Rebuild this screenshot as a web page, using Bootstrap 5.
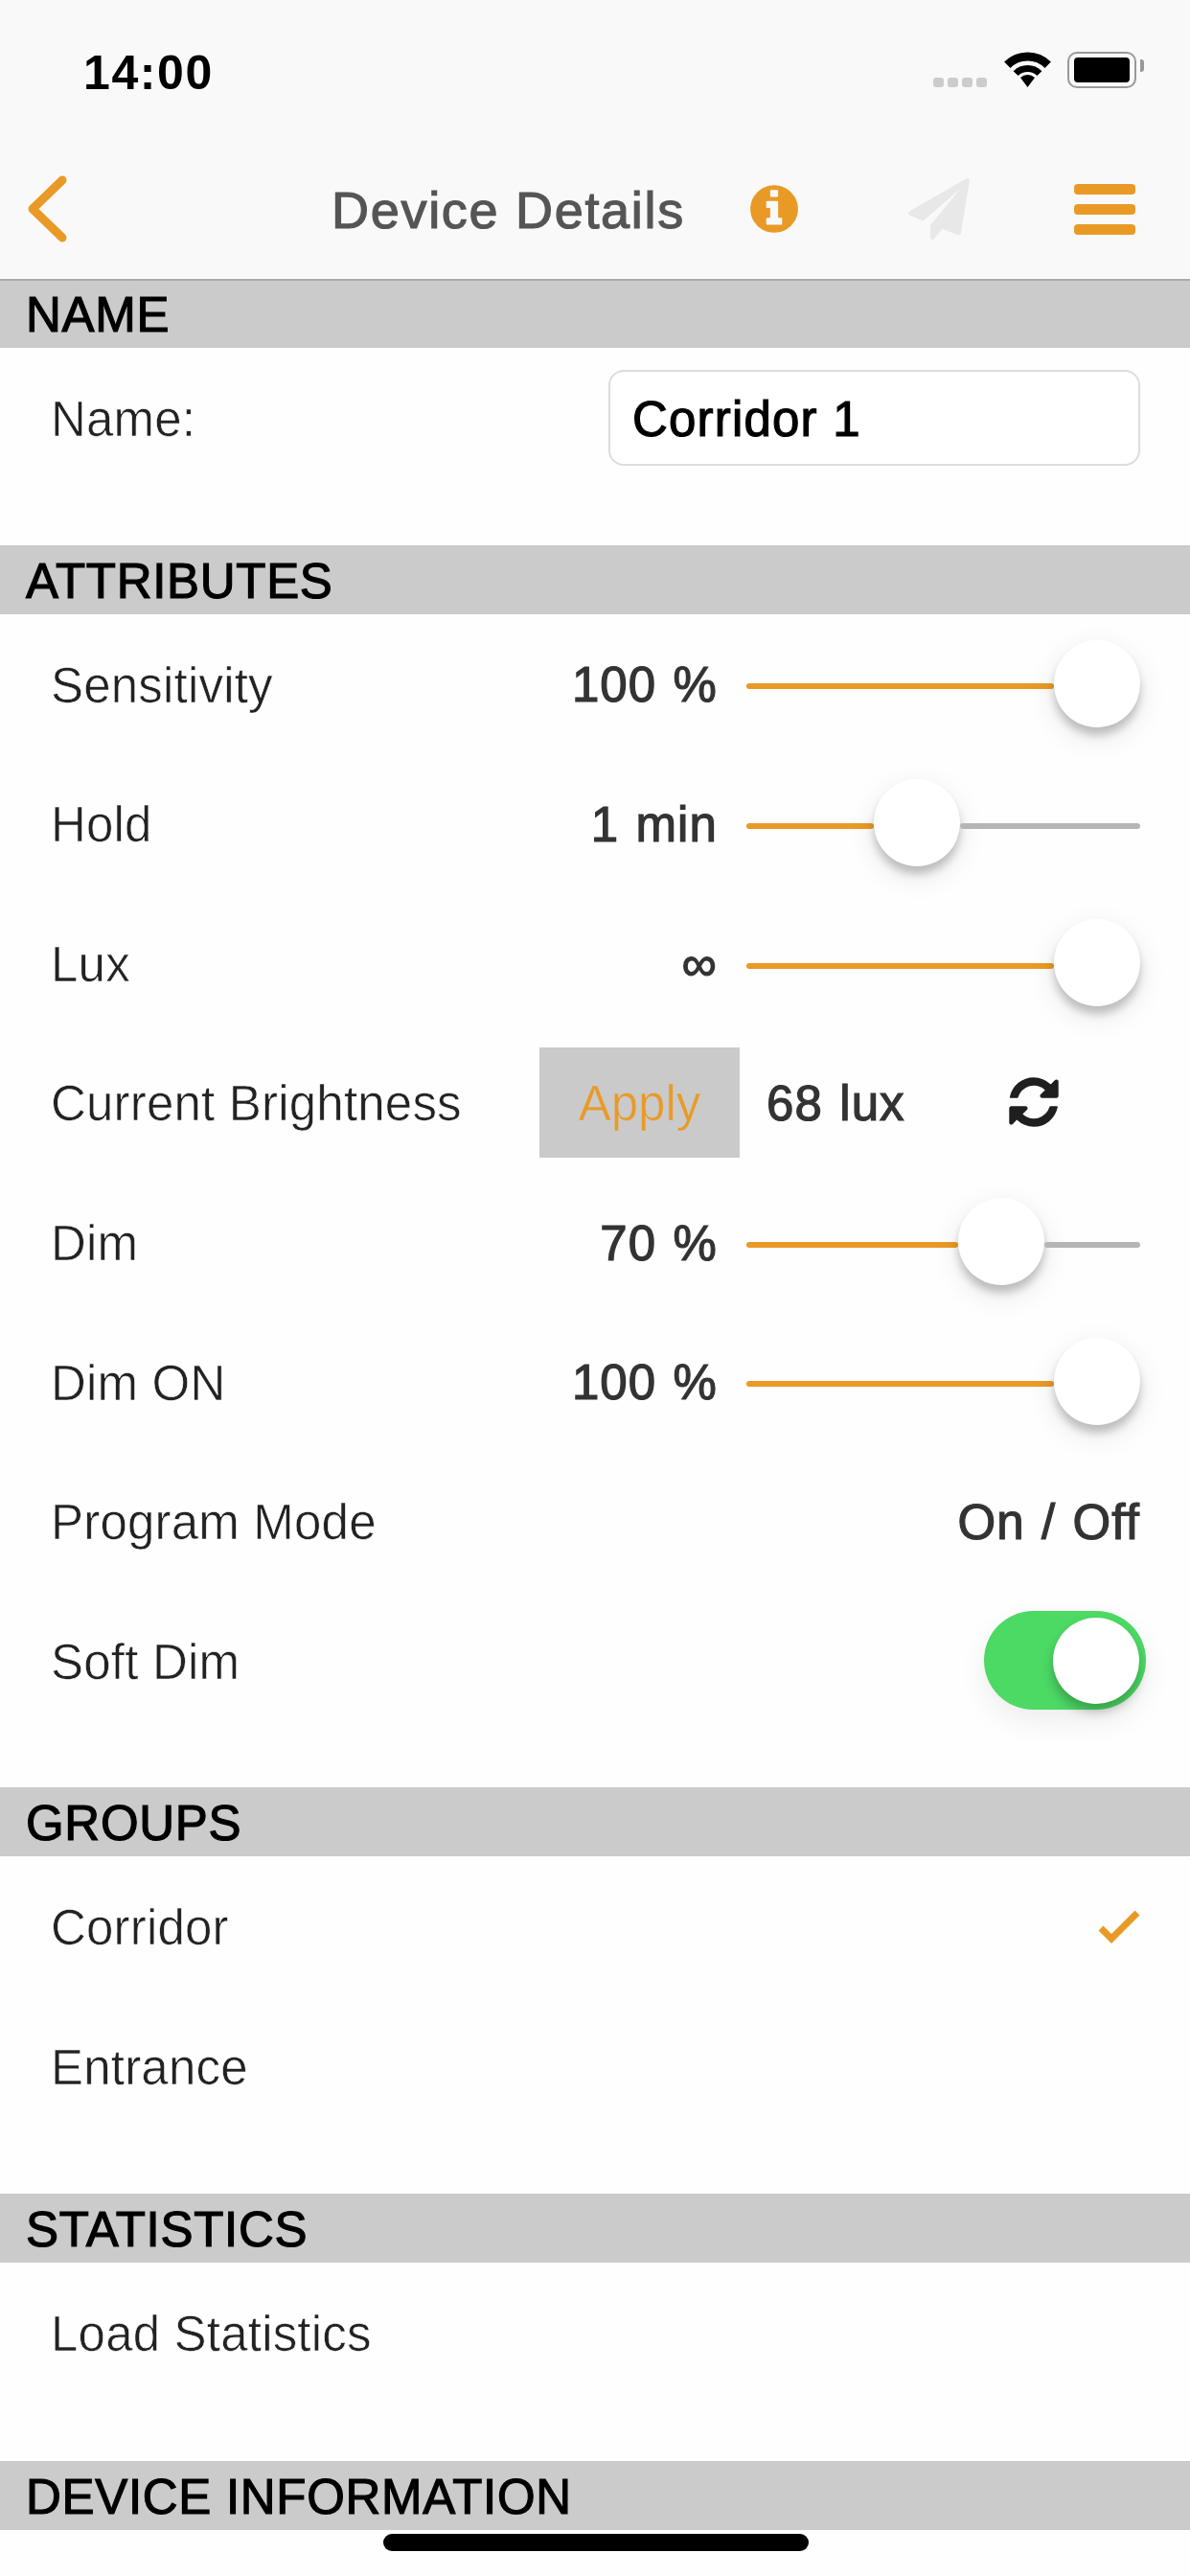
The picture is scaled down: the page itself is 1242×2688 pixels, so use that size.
<!DOCTYPE html>
<html lang="en">
<head>
  <meta charset="UTF-8" />
  <meta name="viewport" content="width=device-width, initial-scale=1.0"/>
  <title>Device Details</title>
  <link href="https://cdn.jsdelivr.net/npm/bootstrap@5.3.3/dist/css/bootstrap.min.css" rel="stylesheet">
  <style>
    body {
      background-color: #fefefe;
      font-family: "Liberation Sans", Arial, sans-serif;
      font-size: 51px;
      color: #333;
      height: 2688px;
      overflow: hidden;
    }
    .top-area { background-color: #f9f9f9; height: 291px; }
    .status-row { height: 132px; padding: 54px 48px 0 87px; }
    .clock { font-size: 50px; line-height: 44px; font-weight: 700; letter-spacing: 1.6px; color: #000; }
    .sig-dots { gap: 4px; margin: 27px 17px 0 0; }
    .sig-dots span { width: 11px; height: 10px; border-radius: 3px; background-color: #ccc; }
    .batt-box {
      width: 72px; height: 38px; margin-left: 16px; padding: 4px 5px;
      border: 2px solid #999; border-radius: 10px;
    }
    .batt-box div { height: 100%; background-color: #000; border-radius: 4px; }
    .batt-nub { width: 4px; height: 13px; margin-left: 4px; background-color: #999; border-radius: 0 3px 3px 0; }
    .nav-row { height: 159px; padding: 13px 57px 0 29px; }
    .nav-title {
      font-size: 54px; color: #555; margin-left: 276px; width: 433px; padding-top: 2px;
      white-space: nowrap; letter-spacing: 1.7px; -webkit-text-stroke: 1.2px #555;
    }
    .plane-icon { margin-left: 111px; }
    .menu-icon { margin-left: 109px; }
    .sec-head {
      height: 72px; padding: 3px 0 0 27px; background-color: #cbcbcb; color: #000;
      font-size: 51px; line-height: 69px; letter-spacing: .7px; -webkit-text-stroke: 1.2px #000;
    }
    .sec-head.first-head { border-top: 2px solid #aaa; padding-top: 2px; line-height: 68px; }
    .sec-body { padding-bottom: 60px; }
    .sec-body.stat-body { padding-bottom: 62px; }
    .set-row { height: 145.6px; padding: 0 52px 0 53px; }
    .set-label { padding-top: 5px; letter-spacing: .2px; -webkit-text-stroke: .6px #fefefe; color: #222; }
    .set-value {
      padding-top: 4px; color: #333; white-space: nowrap;
      letter-spacing: 1.1px; word-spacing: 2px; -webkit-text-stroke: 1.2px #333;
    }
    .name-input.form-control {
      width: 555px; height: 100px; padding: 3px 23px 0; font-size: 51px; color: #000;
      border: 2px solid #ddd; border-radius: 16px; background-color: #fff;
      letter-spacing: 1.2px; -webkit-text-stroke: 1.2px #000;
    }
    .slide-value { width: 280px; text-align: right; margin-right: 29px; }
    .slide-box { width: 411px; margin-left: 1px; }
    .slide-on, .slide-off { height: 6px; margin-top: 6px; border-radius: 3px; }
    .slide-on { background-color: #e99a26; }
    .slide-off { background-color: #b5b5b5; flex-grow: 1; }
    .slide-knob {
      width: 90px; height: 91px; flex-shrink: 0; border-radius: 50%; background-color: #fff;
      box-shadow: 0 8px 8px rgba(0,0,0,.2), 0 10px 30px rgba(0,0,0,.1);
    }
    .apply-btn.btn {
      width: 209px; height: 115px; padding: 4px 0 0; border: 0; border-radius: 0;
      background-color: #cacaca; color: #e99a26; font-size: 51px; -webkit-text-stroke: .6px #cacaca;
    }
    .lux-value { width: 277px; padding-left: 28px; }
    .sync-icon { margin-right: 81px; }
    .dim-switch {
      width: 169px; height: 103px; margin-right: -6px; padding: 0 7px; border-radius: 52px;
      background-color: #4cd964; box-shadow: 0 12px 30px rgba(0,0,0,.07);
    }
    .dim-switch div {
      width: 90px; height: 90px; border-radius: 50%; background-color: #fff;
      box-shadow: 0 8px 12px rgba(0,0,0,.25);
    }
    .home-bar {
      position: absolute; left: 400px; top: 2644px; width: 444px; height: 18px;
      background-color: #000; border-radius: 9px;
    }
  </style>
</head>
<body>

  <div class="top-area">
    <div class="status-row d-flex align-items-start">
      <div class="clock">14:00</div>
      <div class="d-flex align-items-start ms-auto">
        <div class="sig-dots d-flex"><span></span><span></span><span></span><span></span></div>
        <svg width="51" height="37" viewBox="0 0 51 37">
          <path d="M4.3 13.8A30 30 0 0 1 46.7 13.8" fill="none" stroke="#000" stroke-width="9"/>
          <path d="M13.1 22.6A17.5 17.5 0 0 1 37.9 22.6" fill="none" stroke="#000" stroke-width="7"/>
          <path d="M25.5 37L18 27A11 11 0 0 1 33 27Z" fill="#000"/>
        </svg>
        <div class="batt-box"><div></div></div>
        <div class="batt-nub mt-2 align-self-start"></div>
      </div>
    </div>
    <nav class="nav-row d-flex align-items-center">
      <svg width="41" height="70" viewBox="0 0 41 70">
        <path d="M36 5L5 35L36 65" fill="none" stroke="#e99a26" stroke-width="9" stroke-linecap="round" stroke-linejoin="round"/>
      </svg>
      <div class="nav-title">Device Details</div>
      <svg width="58" height="58" viewBox="0 0 1792 1792">
        <path fill="#e99a26" d="M1152 1376v-160q0-14-9-23t-23-9h-96v-512q0-14-9-23t-23-9h-320q-14 0-23 9t-9 23v160q0 14 9 23t23 9h96v320h-96q-14 0-23 9t-9 23v160q0 14 9 23t23 9h448q14 0 23-9t9-23zm-128-896v-160q0-14-9-23t-23-9h-192q-14 0-23 9t-9 23v160q0 14 9 23t23 9h192q14 0 23-9t9-23zm640 416q0 209-103 385.5t-279.5 279.5-385.5 103-385.5-103-279.5-279.5-103-385.5 103-385.5 279.5-279.5 385.5-103 385.5 103 279.5 279.5 103 385.5z"/>
      </svg>
      <svg class="plane-icon" width="64" height="64" viewBox="0 0 1792 1792">
        <path fill="#e8e8e8" d="M1764 11q33 24 27 64l-256 1536q-5 29-32 45-14 8-31 8-11 0-24-5l-453-185-242 295q-18 23-49 23-13 0-22-4-19-7-30.5-23.5t-11.5-36.5v-349l864-1059-1069 925-395-162q-37-14-40-55-2-40 32-59l1664-960q15-9 32-9 20 0 36 11z"/>
      </svg>
      <svg class="menu-icon" width="64" height="53" viewBox="0 0 64 53">
        <rect width="64" height="11" rx="4" fill="#e99a26"/>
        <rect y="21" width="64" height="11" rx="4" fill="#e99a26"/>
        <rect y="42" width="64" height="11" rx="4" fill="#e99a26"/>
      </svg>
    </nav>
  </div>

  <div class="sec-head first-head">NAME</div>
  <div class="sec-body">
    <div class="set-row d-flex align-items-center justify-content-between">
      <span class="set-label">Name:</span>
      <input class="name-input form-control" type="text" value="Corridor 1">
    </div>
  </div>

  <div class="sec-head">ATTRIBUTES</div>
  <div class="sec-body">
    <div class="set-row d-flex align-items-center">
      <span class="set-label me-auto">Sensitivity</span>
      <span class="set-value slide-value">100 %</span>
      <div class="slide-box d-flex align-items-center">
        <div class="slide-on" style="width:321px"></div><div class="slide-knob"></div><div class="slide-off"></div>
      </div>
    </div>
    <div class="set-row d-flex align-items-center">
      <span class="set-label me-auto">Hold</span>
      <span class="set-value slide-value">1 min</span>
      <div class="slide-box d-flex align-items-center">
        <div class="slide-on" style="width:133px"></div><div class="slide-knob"></div><div class="slide-off"></div>
      </div>
    </div>
    <div class="set-row d-flex align-items-center">
      <span class="set-label me-auto">Lux</span>
      <span class="set-value slide-value">∞</span>
      <div class="slide-box d-flex align-items-center">
        <div class="slide-on" style="width:321px"></div><div class="slide-knob"></div><div class="slide-off"></div>
      </div>
    </div>
    <div class="set-row d-flex align-items-center">
      <span class="set-label me-auto">Current Brightness</span>
      <button class="apply-btn btn" type="button">Apply</button>
      <span class="set-value lux-value">68 lux</span>
      <svg class="sync-icon" width="60" height="60" viewBox="0 0 1792 1792">
        <path fill="#1f1f1f" d="M1639 1056q0 5-1 7-64 268-268 434.5t-478 166.5q-146 0-282.5-55t-243.5-157l-129 129q-19 19-45 19t-45-19-19-45v-448q0-26 19-45t45-19h448q26 0 45 19t19 45-19 45l-137 137q71 66 161 102t187 36q134 0 250-65t186-179q11-17 53-117 8-23 30-23h192q13 0 22.5 9.5t9.5 22.5zm25-800v448q0 26-19 45t-45 19h-448q-26 0-45-19t-19-45 19-45l138-138q-148-137-349-137-134 0-250 65t-186 179q-11 17-53 117-8 23-30 23h-199q-13 0-22.5-9.5t-9.5-22.5v-7q65-268 270-434.5t480-166.5q146 0 284 55.5t245 156.5l130-129q19-19 45-19t45 19 19 45z"/>
      </svg>
    </div>
    <div class="set-row d-flex align-items-center">
      <span class="set-label me-auto">Dim</span>
      <span class="set-value slide-value">70 %</span>
      <div class="slide-box d-flex align-items-center">
        <div class="slide-on" style="width:221px"></div><div class="slide-knob"></div><div class="slide-off"></div>
      </div>
    </div>
    <div class="set-row d-flex align-items-center">
      <span class="set-label me-auto">Dim ON</span>
      <span class="set-value slide-value">100 %</span>
      <div class="slide-box d-flex align-items-center">
        <div class="slide-on" style="width:321px"></div><div class="slide-knob"></div><div class="slide-off"></div>
      </div>
    </div>
    <div class="set-row d-flex align-items-center justify-content-between">
      <span class="set-label">Program Mode</span>
      <span class="set-value">On / Off</span>
    </div>
    <div class="set-row d-flex align-items-center justify-content-between">
      <span class="set-label">Soft Dim</span>
      <div class="dim-switch d-flex align-items-center justify-content-end"><div></div></div>
    </div>
  </div>

  <div class="sec-head">GROUPS</div>
  <div class="sec-body">
    <div class="set-row d-flex align-items-center justify-content-between">
      <span class="set-label">Corridor</span>
      <svg width="44" height="36" viewBox="0 0 44 36">
        <path d="M3 20L14 31L41 4" fill="none" stroke="#e99a26" stroke-width="7"/>
      </svg>
    </div>
    <div class="set-row d-flex align-items-center">
      <span class="set-label">Entrance</span>
    </div>
  </div>

  <div class="sec-head">STATISTICS</div>
  <div class="sec-body stat-body">
    <div class="set-row d-flex align-items-center">
      <span class="set-label">Load Statistics</span>
    </div>
  </div>

  <div class="sec-head">DEVICE INFORMATION</div>

  <div class="home-bar"></div>

  <script src="https://cdn.jsdelivr.net/npm/bootstrap@5.3.3/dist/js/bootstrap.bundle.min.js"></script>
</body>
</html>
